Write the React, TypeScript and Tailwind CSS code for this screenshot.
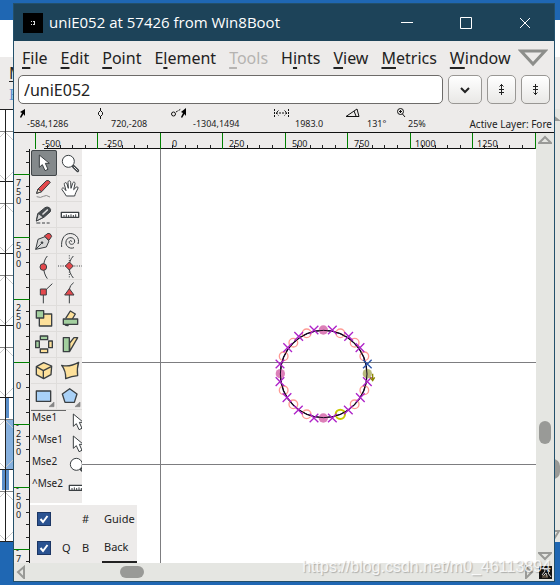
import React, { type ReactNode } from "react";

const INK = "#3a3f42";
const RED = "#e4484c";
const GREEN = "#a3cf9f";
const YELLOW = "#fde09a";
const BLUE = "#a9d1f7";

const menus = [
  { before: "", key: "F", after: "ile" },
  { before: "", key: "E", after: "dit" },
  { before: "", key: "P", after: "oint" },
  { before: "E", key: "l", after: "ement" },
  { before: "", key: "T", after: "ools", disabled: true },
  { before: "H", key: "i", after: "nts" },
  { before: "", key: "V", after: "iew" },
  { before: "", key: "M", after: "etrics" },
  { before: "", key: "W", after: "indow" },
];

function Icon({ children, className = "h-[26px] w-[26px]" }: { children: ReactNode; className?: string }) {
  return (
    <svg viewBox="0 0 78 78" className={className} fill="none" stroke={INK} strokeWidth="4" strokeLinejoin="round" aria-hidden="true">
      {children}
    </svg>
  );
}

const arrowShape = <path d="M25 15v37l9-8 8 18 9-4-8-18h12z" fill="#fff" strokeWidth="3" />;
const magnifierShape = (
  <>
    <path d="M49 49l13 13" strokeWidth="9" strokeLinecap="round" />
    <path d="M51 51l10 10" stroke="#e6e6e6" strokeWidth="3" strokeLinecap="round" />
    <circle cx="34" cy="34" r="18" fill="#fff" strokeWidth="3" />
  </>
);
const rulerShape = (
  <>
    <rect x="13" y="31" width="52" height="15" fill="#fff" />
    <path d="M21 45v-6M28 45v-8M35 45v-6M42 45v-8M49 45v-6M56 45v-8" strokeWidth="3" />
  </>
);

const tools: { name: string; shape: ReactNode }[] = [
  { name: "Pointer", shape: arrowShape },
  { name: "Magnify", shape: magnifierShape },
  {
    name: "Draw freehand",
    shape: (
      <>
        <path d="M17 52l4-13 25-25q8-3 12 5L32 47z" fill={RED} strokeWidth="3" />
        <path d="M17 52l4-13 11 8z" fill="#f3e3d0" strokeWidth="3" />
        <path d="M17 62q12 5 20-1t20 2" strokeWidth="3" stroke="#8a8a8a" />
      </>
    ),
  },
  {
    name: "Scroll by hand",
    shape: (
      <path
        d="M28 60c-3-7-9-12-13-19-2-5 4-7 7-3l5 6-5-19c-1-6 6-7 8-1l4 13-1-18c0-6 8-6 8 0l1 18 5-15c2-6 8-4 7 1l-4 18 7-7c4-4 8 0 5 5-5 9-7 13-9 21z"
        fill="#fff"
        strokeWidth="3"
      />
    ),
  },
  {
    name: "Cut splines",
    shape: (
      <>
        <path d="M16 57l4-22 22-18q6-4 13 0 6 5 3 12L40 45z" fill="#474c50" strokeWidth="3" />
        <path d="M16 57l6-23 15 12z" fill="#d6d6d6" strokeWidth="3" />
        <path d="M36 36l13-12" stroke="#e0e0e0" strokeWidth="5" strokeLinecap="round" />
        <path d="M16 63h12m5 0h9m5 0h9" strokeWidth="3" />
      </>
    ),
  },
  { name: "Measure", shape: rulerShape },
  {
    name: "Pen",
    shape: (
      <>
        <path d="M14 64l7-30 21-8 12 13-8 18z" fill="#d8d8d8" strokeWidth="3" />
        <path d="M14 64l17-17" strokeWidth="3" />
        <circle cx="33" cy="44" r="3" fill={INK} strokeWidth="2" />
        <path d="M40 24l11-8q8-1 11 9l-8 12z" fill={RED} strokeWidth="3" />
      </>
    ),
  },
  {
    name: "Spiro",
    shape: <path d="M44 41c1-5-9-4-7 3 3 9 17 5 16-5-1-12-20-14-25-2-6 15 9 28 23 22M63 48C70 28 52 14 35 17 20 20 12 36 14 57" strokeWidth="3" />,
  },
  {
    name: "Add curve point",
    shape: (
      <>
        <path d="M49 6C34 22 34 54 49 74" strokeWidth="3" />
        <circle cx="37" cy="39" r="10" fill={RED} strokeWidth="3" />
      </>
    ),
  },
  {
    name: "Add HV curve point",
    shape: (
      <>
        <path d="M3 36h72M37 4v70" strokeWidth="3" strokeDasharray="3 4" />
        <path d="M49 6C32 24 32 52 49 72" strokeWidth="3" />
        <path d="M37 24l12 12-12 12-12-12z" fill={RED} strokeWidth="3" />
      </>
    ),
  },
  {
    name: "Add corner point",
    shape: (
      <>
        <path d="M46 28l18-17M37 45v25" strokeWidth="3" />
        <rect x="28" y="27" width="18" height="18" fill={RED} strokeWidth="3" />
      </>
    ),
  },
  {
    name: "Add tangent point",
    shape: (
      <>
        <path d="M37 28q1-12 13-20M37 45v25" strokeWidth="3" />
        <path d="M37 26l14 19H23z" fill={RED} strokeWidth="3" />
      </>
    ),
  },
  {
    name: "Scale",
    shape: (
      <>
        <rect x="25" y="24" width="37" height="36" fill={YELLOW} />
        <rect x="16" y="14" width="22" height="22" fill={GREEN} />
      </>
    ),
  },
  {
    name: "Rotate",
    shape: (
      <>
        <path d="M26 37l14-22 15 9-9 15" fill={YELLOW} />
        <path d="M22 53q3 7 13 5" />
        <rect x="19" y="39" width="43" height="16" fill={GREEN} />
      </>
    ),
  },
  {
    name: "Flip",
    shape: (
      <>
        <rect x="28" y="12" width="22" height="11" fill={GREEN} />
        <rect x="28" y="51" width="22" height="11" fill={YELLOW} />
        <rect x="14" y="27" width="11" height="20" fill={GREEN} />
        <rect x="53" y="27" width="11" height="20" fill={YELLOW} />
      </>
    ),
  },
  {
    name: "Skew",
    shape: (
      <>
        <path d="M38 58V33l13-16h11z" fill={YELLOW} />
        <rect x="19" y="17" width="18" height="42" fill={GREEN} />
      </>
    ),
  },
  {
    name: "Rotate in 3D",
    shape: (
      <>
        <path d="M38 14l24 10-2 26-22 12-22-12V26z" fill={YELLOW} />
        <path d="M16 26l21 12 25-13M37 38v23" />
      </>
    ),
  },
  { name: "Perspective", shape: <path d="M14 22q24 6 51-9-6 18-3 40-18 2-36 9 1-24-12-40z" fill={YELLOW} /> },
  {
    name: "Rectangle",
    shape: (
      <>
        <rect x="16" y="21" width="43" height="31" fill={BLUE} />
        <path d="M69 54v14H54z" fill="#858585" stroke="#858585" strokeWidth="2" />
      </>
    ),
  },
  {
    name: "Polygon",
    shape: (
      <>
        <path d="M38 14l22 16-8 25H24l-8-25z" fill={BLUE} />
        <path d="M69 54v14H54z" fill="#858585" stroke="#858585" strokeWidth="2" />
      </>
    ),
  },
];

const mouseBindings = [
  { label: "Mse1", shape: arrowShape },
  { label: "^Mse1", shape: arrowShape },
  { label: "Mse2", shape: magnifierShape },
  { label: "^Mse2", shape: rulerShape },
];

const offCurve = [
  [162, 45], [217, 45], [116, 64], [266, 64], [83, 98], [300, 98], [60, 147],
  [60, 200], [322, 200], [81, 248], [301, 248], [115, 285], [265, 285], [162, 309], [217, 309],
];
const implied = [
  [140, 55], [241, 55], [100, 83], [284, 83], [71, 124], [313, 124],
  [71, 226], [313, 226], [100, 268], [284, 268], [140, 298],
];
const onCurve = [[190, 45], [61, 176], [190, 309]];

function GlyphOutline() {
  return (
    <svg viewBox="0 0 390 360" className="absolute top-[166px] left-[230px] h-[120px] w-[130px]" fill="none" role="img" aria-label="Glyph outline">
      <ellipse cx="191" cy="177" rx="130" ry="131" stroke="#12061c" strokeWidth="4" />
      {onCurve.map(([x, y]) => (
        <circle key={`${x}-${y}`} cx={x} cy={y} r="14" fill="#dc7fb8" />
      ))}
      <circle cx="322" cy="176" r="14" fill="#b9bb7c" />
      {implied.map(([x, y]) => (
        <circle key={`${x}-${y}`} cx={x} cy={y} r="13" stroke="#ff9a94" strokeWidth="4" />
      ))}
      <circle cx="241" cy="298" r="14" stroke="#c8c800" strokeWidth="6" />
      <ellipse cx="191" cy="177" rx="130" ry="131" stroke="#12061c" strokeWidth="3" />
      {offCurve.map(([x, y]) => (
        <path key={`${x}-${y}`} d={`M${x - 13} ${y - 13}l26 26m0-26l-26 26`} stroke="#ae22c8" strokeWidth="4" />
      ))}
      <path d="M309 134l26 26m0-26l-26 26" stroke="#2e56a8" strokeWidth="4" />
      <path d="M338 176v20m-8-9l8 10 6-10" stroke="#8a8400" strokeWidth="4" />
    </svg>
  );
}

const STEP = 62.5;

function TopRuler() {
  const marks = [-2, -1, 0, 1, 2, 3, 4, 5, 6];
  return (
    <svg className="col-span-2 h-full w-full" fontFamily="'Noto Sans',sans-serif" fontSize="9" fill="#222">
      <path d="M30 15.5H522" stroke="#111" />
      {marks.map((m) => {
        const x = Math.floor(146 + m * STEP);
        return (
          <g key={m}>
            {[1, 2, 3, 4].map((n) => (
              <path key={n} d={`M${Math.floor(x + n * 12.5) + 0.5} 12v4`} stroke="#222" />
            ))}
            <path d={`M${x + 0.5} 0v16`} stroke="#008000" />
            {m < 6 && (
              <text x={m === 0 ? x + 12 : m > 3 ? x + 5 : x + 7} y="14">
                {m * 250}
              </text>
            )}
          </g>
        );
      })}
    </svg>
  );
}

function SideRuler() {
  const marks = [3, 2, 1, 0, -1, -2, -3];
  return (
    <svg className="h-full w-full" fontFamily="'Noto Sans',sans-serif" fontSize="9" fill="#222">
      <path d="M15.5 0V414" stroke="#111" />
      <path d="M12 2.5h4M12 13.5h4" stroke="#222" />
      {marks.map((m) => {
        const y = Math.floor(213 - m * STEP);
        const label = String(m * 250).split("");
        const digits = m === -3 ? label.slice(0, 2) : label;
        const start = m === 0 ? y + 27 : m < 0 ? y + 4 : y + 12;
        return (
          <g key={m}>
            {[1, 2, 3, 4].map((n) => (
              <path key={n} d={`M12 ${Math.floor(y + n * 12.5) + 0.5}h4`} stroke="#222" />
            ))}
            <path d={`M0 ${y + 0.5}h16`} stroke="#008000" />
            <text>
              {digits.map((d, i) => (
                <tspan key={i} x={2} y={start + i * 9}>
                  {d}
                </tspan>
              ))}
            </text>
          </g>
        );
      })}
    </svg>
  );
}

function Readout({ children, icon, iconClass }: { children: ReactNode; icon: ReactNode; iconClass: string }) {
  return (
    <div className="flex">
      <svg className={`h-[14px] shrink-0 ${iconClass}`} fill="none" stroke="#111" aria-hidden="true">
        {icon}
      </svg>
      <span className="self-end text-[9px] whitespace-nowrap">{children}</span>
    </div>
  );
}

function InfoBar() {
  return (
    <div className="grid h-[27px] grid-cols-[77px_74px_103px_71px_52px_1fr_auto] overflow-hidden pt-[3px] pr-[2px] pb-[1px] pl-[6px] font-['Noto_Sans',sans-serif] text-[10px] leading-[14px]">
      <Readout iconClass="w-[7px]" icon={<path d="M5 1v7L3.500 6 1 10 0 9l2-4-2-1z" fill="#000" stroke="none" />}>-584,1286</Readout>
      <Readout iconClass="w-[14px]" icon={<path d="M3.500 0v3m0 5v3M1.500 4.500l2-2 2 2v2l-2 2-2-2z" />}>720,-208</Readout>
      <Readout
        iconClass="w-[22px]"
        icon={
          <>
            <circle cx="2.500" cy="6" r="2" />
            <path d="M5 4l5-3" strokeDasharray="2 1" />
            <path d="M15 0v8l-1.500-2-2.500 4-1-1 2-4-2-1z" fill="#000" stroke="none" />
          </>
        }
      >
        -1304,1494
      </Readout>
      <Readout iconClass="w-[21px]" icon={<path d="M.5 1v8M14.500 1v8M2 5h11M4.500 2.500L2 5l2.500 2.500M10.500 2.500L13 5l-2.500 2.500" strokeDasharray="2 1" />}>1983.0</Readout>
      <Readout iconClass="w-[22px]" icon={<path d="M12 1L1 8.500h13zM9 3l2 5" />}>131°</Readout>
      <Readout
        iconClass="w-[11px]"
        icon={
          <>
            <circle cx="3.500" cy="3.500" r="3" />
            <path d="M2 3.500h3M3.500 2v3M5.500 6L8 9" />
          </>
        }
      >
        25%
      </Readout>
      <span className="self-end whitespace-nowrap">Active Layer: Fore</span>
    </div>
  );
}

function Layers() {
  const rows = [
    { q: "", b: "#", name: "Guide", active: false },
    { q: "Q", b: "B", name: "Back", active: true },
  ];
  return (
    <div className="absolute bottom-0 left-0 grid w-[107px] grid-rows-[28px_30px] bg-[#edebea] text-[11px] text-[#222]">
      {rows.map((r) => (
        <div key={r.name} className="grid grid-cols-[24px_21px_20px_1fr] items-center pl-[7px]">
          <label className="relative block h-[14px] w-[14px]">
            <input type="checkbox" defaultChecked aria-label={`Show ${r.name}`} className="block h-[14px] w-[14px] appearance-none border border-[#1c3664] bg-[#2a5291]" />
            <svg viewBox="0 0 14 14" className="pointer-events-none absolute inset-0" fill="none" stroke="#fff" strokeWidth="2" aria-hidden="true">
              <path d="M3.500 7l2.500 3 4.500-6" />
            </svg>
          </label>
          <span className="pl-[1px]">{r.q}</span>
          <span>{r.b}</span>
          <span className={r.active ? "flex h-full items-center border-b-2 border-[#222] pl-[2px]" : "pl-[2px]"}>{r.name}</span>
        </div>
      ))}
    </div>
  );
}

function ToolPalette() {
  return (
    <div className="absolute top-0 left-0 h-[354px] w-[52px] overflow-hidden bg-[#edebea] pt-[1px] pl-[1px]">
      <div className="grid w-[52px] grid-cols-2">
        {tools.map((t, i) => (
          <button
            key={t.name}
            type="button"
            aria-label={t.name}
            className={
              i === 0
                ? "h-[26px] w-[26px] rounded-[2px] bg-[#84898b] outline-1 -outline-offset-1 outline-[#42474a]"
                : "h-[26px] w-[26px] border-r border-b border-[#dfdddb]"
            }
          >
            <Icon>{t.shape}</Icon>
          </button>
        ))}
      </div>
      <div className="h-px w-[35px] bg-[#666]" />
      <ul className="w-[57px]">
        {mouseBindings.map((b) => (
          <li key={b.label} className="flex h-[22px] justify-between font-['Noto_Sans',sans-serif] text-[10px] leading-[12px]">
            <span className="pl-[1px]">{b.label}</span>
            <Icon className="-mt-[2px] -mr-[3px] h-[26px] w-[26px] shrink-0">{b.shape}</Icon>
          </li>
        ))}
      </ul>
    </div>
  );
}

function Triangle({ className, d }: { className: string; d: string }) {
  return (
    <svg viewBox="0 0 14 14" className={className} fill="none" stroke="#999a97" strokeWidth="2" aria-hidden="true">
      <path d={d} />
    </svg>
  );
}

const boxButton =
  "flex h-[29px] items-center justify-center rounded-[5px] border border-[#999794] bg-linear-to-b from-white to-[#e9e8e6]";

function BackWindow() {
  const cells = [0, 1, 2, 3, 4, 5];
  return (
    <div className="absolute inset-x-0 top-[20px] bottom-[43px] flex flex-col overflow-hidden bg-white" aria-hidden="true">
      <div className="h-[37px]" />
      <div className="h-[52px] bg-[#edebea] pl-[9px] font-['Noto_Sans',sans-serif] text-[16px] leading-[24px]">
        <div className="pt-[4px] underline underline-offset-2">M</div>
        <div className="font-['Liberation_Serif',serif] leading-[20px] text-[#5b8fd0]">F</div>
      </div>
      <div className="flex flex-1 justify-between">
        <svg className="h-full w-[14px]" fill="none">
          <path d="M5 289h4v20H5zM2 361h7v20H2z" fill="#5a8ec9" />
          <path d="M5 310h9v50H5z" fill="#86b0de" />
          {cells.map((c) => (
            <g key={c} transform={`translate(0 ${c * 72})`}>
              <path d="M0 28l5-5 9 9M0 66l5 5 9-9" stroke="#c9c9c9" />
              <path d="M0 22.500h14" stroke="#808080" />
              <path d="M0 72.500h14" stroke="#222" />
            </g>
          ))}
          <path d="M0 .5h14M5.500 0v433" stroke="#222" />
        </svg>
        <div className="flex w-[14px] flex-col bg-[#e5e6e2]">
          <Triangle className="h-[14px] w-[14px]" d="M3 4l9 7H3" />
          <div className="mt-[336px] mb-auto h-[20px] rounded-full bg-[#999a97]" />
          <Triangle className="h-[14px] w-[14px]" d="M5 3h8l-5 8z" />
        </div>
      </div>
    </div>
  );
}

export default function App() {
  return (
    <div className="relative min-h-screen overflow-hidden bg-[#1f67b3] font-['Noto_Sans',sans-serif] text-[#222]">
      <BackWindow />

      <main className="absolute top-[3px] right-[5px] bottom-[3px] left-[13px] flex flex-col overflow-hidden border border-[#23506b] bg-[#edebea]">
        <header className="flex h-[37px] shrink-0 items-center bg-[#1d4359] pl-[9px] text-white">
          <svg className="h-[20px] w-[20px]" aria-hidden="true">
            <path d="M0 0h20v20H0z" fill="#000" />
            <path d="M8 8h1v1H8zM10 8h2v1h-2zM8 11h1v1H8zM10 11h2v1h-2zM11 9h1v2h-1z" fill="#ddd" />
          </svg>
          <h1 className="flex-1 pl-[6px] font-['Open_Sans',sans-serif] text-[15px] whitespace-nowrap">uniE052 at 57426 from Win8Boot</h1>
          {[
            { name: "Minimize", d: "M0 5.500h12" },
            { name: "Maximize", d: "M.5.5h11v11H.5z" },
            { name: "Close", d: "M1 1l10 10M11 1L1 11" },
          ].map((b) => (
            <button key={b.name} type="button" aria-label={b.name} className="flex h-full w-[59px] items-center justify-center">
              <svg className="h-[12px] w-[12px]" fill="none" stroke="#fff">
                <path d={b.d} />
              </svg>
            </button>
          ))}
        </header>

        <div className="flex h-[33px] shrink-0 items-center justify-between pr-[6px] pl-[8px] text-[16px]">
          <nav className="flex gap-[13px]">
            {menus.map((m) => (
              <button key={m.key + m.after} type="button" disabled={m.disabled} className={m.disabled ? "text-[#b5b3b1]" : ""}>
                {m.before}
                <span className="underline decoration-2 underline-offset-3">{m.key}</span>
                {m.after}
              </button>
            ))}
          </nav>
          <svg className="h-[18px] w-[30px] shrink-0" fill="none" stroke="#8d8e8b" strokeWidth="3" aria-hidden="true">
            <path d="M3 2h24L15 15z" />
          </svg>
        </div>

        <div className="flex h-[31px] shrink-0 items-center gap-[5px] pr-[4px] pl-[4px]">
          <input
            aria-label="Glyph name"
            defaultValue="/uniE052"
            className="h-[29px] min-w-0 flex-1 rounded-[5px] border border-[#6d6b69] bg-white px-[5px] text-[16px] outline-none"
          />
          <button type="button" aria-label="Glyph history" className={`${boxButton} w-[34px]`}>
            <svg className="h-[8px] w-[10px]" fill="none" stroke="#222" strokeWidth="2">
              <path d="M1 2l4 4 4-4" />
            </svg>
          </button>
          <button type="button" aria-label="Previous glyph" className={`${boxButton} w-[29px]`}>
            <svg className="h-[13px] w-[7px]" fill="none" stroke="#222">
              <path d="M3.500 1v11M1.500 3.500l2-2 2 2M1 6.500h5M1 9.500h5" />
            </svg>
          </button>
          <button type="button" aria-label="Next glyph" className={`${boxButton} w-[29px]`}>
            <svg className="h-[13px] w-[7px]" fill="none" stroke="#222">
              <path d="M3.500 1v11M1.500 9.500l2 2 2-2M1 3.500h5M1 6.500h5" />
            </svg>
          </button>
        </div>

        <InfoBar />

        <div className="grid min-h-0 flex-1 grid-cols-[16px_1fr_18px] grid-rows-[16px_1fr_18px] border-t border-[#111]">
          <TopRuler />
          <div className="row-span-2 flex flex-col items-center bg-[#e5e6e2]">
            <Triangle className="h-[14px] w-[14px]" d="M7 4l6 6H1z" />
            <div className="mt-[274px] mb-auto h-[23px] w-[12px] rounded-full bg-[#999a97]" />
            <Triangle className="h-[14px] w-[14px]" d="M7 10l6-6H1z" />
          </div>
          <SideRuler />
          <div className="relative overflow-hidden bg-white">
            <svg className="absolute inset-0 h-full w-full" stroke="#7d7d80" aria-hidden="true">
              <path d="M130.500 0V2000M0 213.500H3000M0 315.500H3000" />
            </svg>
            <GlyphOutline />
            <ToolPalette />
            <Layers />
          </div>
          <div className="col-span-2 flex items-center bg-[#e5e6e2]">
            <Triangle className="h-[14px] w-[14px]" d="M10 2v11L4 7z" />
            <div className="mr-auto ml-[92px] h-[12px] w-[24px] rounded-full bg-[#999a97]" />
            <Triangle className="h-[14px] w-[14px]" d="M4 2v11l6-6z" />
          </div>
          <div className="flex items-center justify-center bg-[#e5e6e2]">
            <svg className="h-[13px] w-[13px]" fill="none" aria-hidden="true">
              <path d="M0 0h13v13H0z" fill="#111" />
              <path d="M1 3l4-1 1 3-3 4M6 3l5 2-2 2 3 4M4 10l3-3 1 4" stroke="#ccc" />
              <path d="M3 9h6v3H3z" fill="#7b6a58" opacity=".6" />
            </svg>
          </div>
        </div>
      </main>

      <p className="pointer-events-none absolute right-[9px] bottom-[8px] font-['Liberation_Sans',sans-serif] text-[16px] leading-[20px] text-white/80 [text-shadow:1px_1px_1px_rgba(0,0,0,0.25)]">
        https://blog.csdn.net/m0_46113894
      </p>
    </div>
  );
}
